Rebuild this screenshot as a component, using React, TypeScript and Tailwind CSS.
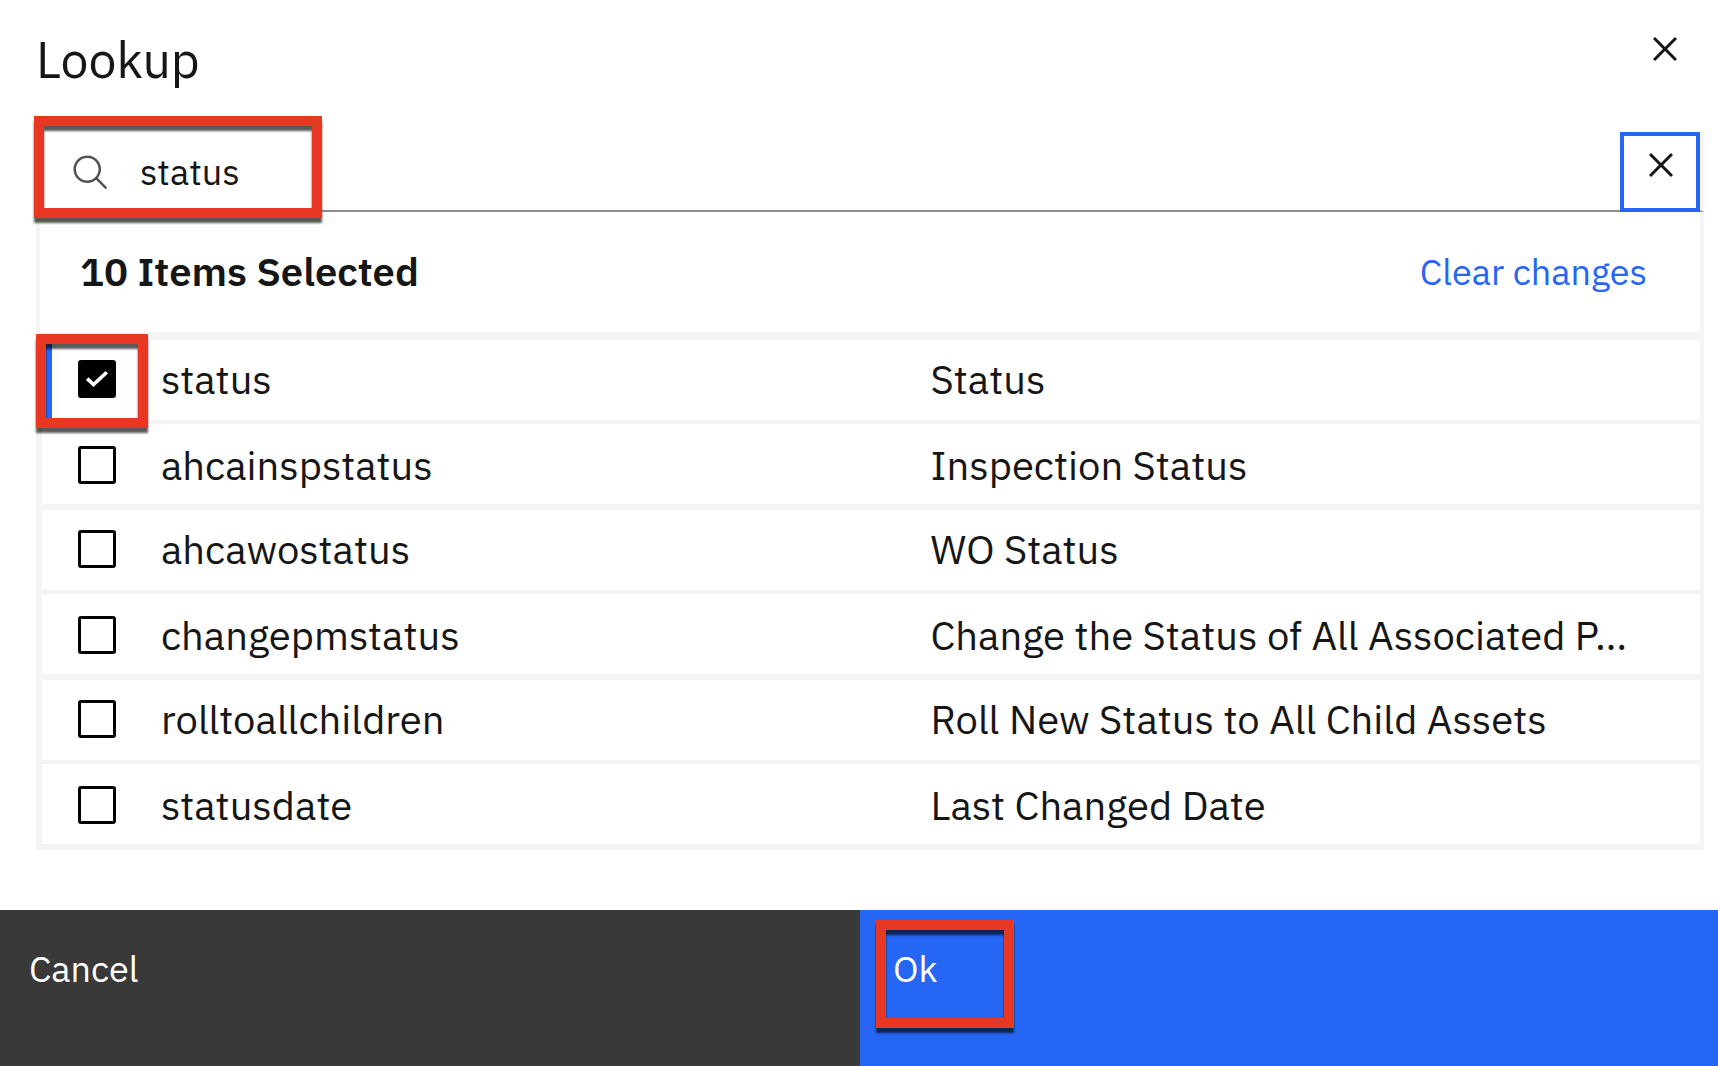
import { useState } from "react";

type Item = { id: string; label: string };

const items: Item[] = [
  { id: "status", label: "Status" },
  { id: "ahcainspstatus", label: "Inspection Status" },
  { id: "ahcawostatus", label: "WO Status" },
  { id: "changepmstatus", label: "Change the Status of All Associated P…" },
  { id: "rolltoallchildren", label: "Roll New Status to All Child Assets" },
  { id: "statusdate", label: "Last Changed Date" },
];

function CloseIcon() {
  return (
    <svg viewBox="0 0 32 32" className="size-12" fill="currentColor" aria-hidden="true">
      <path d="M24 9.4L22.6 8 16 14.6 9.4 8 8 9.4 14.6 16 8 22.6 9.4 24 16 17.4 22.6 24 24 22.6 17.4 16 24 9.4z" />
    </svg>
  );
}

function SearchIcon() {
  return (
    <svg viewBox="0 0 32 32" className="size-10 shrink-0 text-[#525252]" fill="currentColor" aria-hidden="true">
      <path d="M29,27.5859l-7.5521-7.5521a11.0177,11.0177,0,1,0-1.4141,1.4141L27.5859,29ZM4,13a9,9,0,1,1,9,9A9.01,9.01,0,0,1,4,13Z" />
    </svg>
  );
}

/* Red call-out frame laid over the control it points at. */
function Callout({ className }: { className: string }) {
  return (
    <span
      aria-hidden="true"
      className={
        "pointer-events-none absolute z-10 border-10 border-[#e83723] drop-shadow-[0_5px_1px_rgba(0,0,0,0.65)] " +
        className
      }
    />
  );
}

const cell = "border-b-4 border-[#f4f4f4] p-0 pb-0.5 group-even:border-b-6 group-even:pb-0 group-even:pt-0.5 ";

function Row({ item, checked, onToggle, first }: { item: Item; checked: boolean; onToggle: () => void; first: boolean }) {
  return (
    <tr className="group">
      <td
        className={
          cell +
          "relative h-[84px] group-even:h-[86px] " +
          (checked ? "shadow-[inset_10px_0_0_#2566f5]" : "")
        }
      >
        <span className="relative ml-9 block size-[38px]">
          <input
            id={item.id}
            type="checkbox"
            checked={checked}
            onChange={onToggle}
            className="block size-[38px] appearance-none rounded-[3px] border-3 border-black bg-white checked:bg-black"
          />
          {checked && (
            <svg viewBox="0 0 38 38" className="pointer-events-none absolute inset-0" fill="none" stroke="white" strokeWidth="3.6" aria-hidden="true">
              <path d="M9.2 18.6l6.3 6L28.8 12.3" />
            </svg>
          )}
        </span>
        {first && <Callout className="-left-1.5 -top-1.5 h-[94px] w-28" />}
      </td>
      <td className={cell}>
        <label htmlFor={item.id} className="block">
          {item.id}
        </label>
      </td>
      <td className={cell + "whitespace-nowrap"}>{item.label}</td>
    </tr>
  );
}

export default function App() {
  const [query, setQuery] = useState("status");
  const [selected, setSelected] = useState<string[]>(["status"]);

  const toggle = (id: string) =>
    setSelected((ids) => (ids.includes(id) ? ids.filter((x) => x !== id) : [...ids, id]));

  return (
    <div
      role="dialog"
      aria-labelledby="title"
      className="flex min-h-screen flex-col bg-white font-['IBM_Plex_Sans','Noto_Sans',sans-serif] text-[#161616]"
    >
      <header className="flex items-start justify-between pl-9 pr-[29px]">
        <h1 id="title" className="pt-7 text-[50px] leading-16">
          Lookup
        </h1>
        <button type="button" aria-label="Close" className="mt-[25px]">
          <CloseIcon />
        </button>
      </header>

      <main className="ml-9 mr-3.5 mt-10 flex-1">
        <div className="relative flex h-20 items-stretch border-b-2 border-r-4 border-b-[#8d8d8d] border-r-[#f4f4f4]">
          <label htmlFor="search" className="flex items-center pl-[35px] pt-1">
            <SearchIcon />
          </label>
          <input
            id="search"
            type="text"
            aria-label="Search"
            value={query}
            onChange={(e) => setQuery(e.target.value)}
            className="min-w-0 flex-1 pl-[29px] pt-0.5 text-[36px] leading-12 outline-none"
          />
          <button
            type="button"
            aria-label="Clear search"
            className="-mb-0.5 flex w-20 items-center justify-center border-4 border-[#2566f5] pb-3.5 pl-0.5"
          >
            <CloseIcon />
          </button>
          <Callout className="-left-0.5 -top-4 h-[102px] w-72" />
        </div>

        <section className="border-x-4 border-[#f4f4f4]">
          <div className="flex h-32 items-center justify-between border-b-8 border-[#f4f4f4] pl-10 pr-[53px]">
            <h2 className="pb-0.5 text-[40px] leading-12 font-semibold">10 Items Selected</h2>
            <button type="button" onClick={() => setSelected([])} className="text-[36px] leading-12 text-[#2566f5]">
              Clear changes
            </button>
          </div>
          <div className="border-l-2 border-[#f4f4f4]">
            <table className="w-full table-fixed border-separate border-spacing-0 text-[40px] leading-12">
              <colgroup>
                <col className="w-[119px]" />
                <col />
                <col />
              </colgroup>
              <tbody>
                {items.map((item, i) => (
                  <Row
                    key={item.id}
                    item={item}
                    first={i === 0}
                    checked={selected.includes(item.id)}
                    onToggle={() => toggle(item.id)}
                  />
                ))}
              </tbody>
            </table>
          </div>
        </section>
      </main>

      <footer className="mt-[60px] flex h-[156px] text-[36px] leading-12 text-white">
        <button type="button" className="flex w-[calc(50%+1px)] items-start bg-[#393939] pl-[29px] pt-[35px]">
          Cancel
        </button>
        <button type="button" className="relative flex flex-1 items-start bg-[#2566f5] pl-[33px] pt-[35px]">
          Ok
          <Callout className="left-4 top-2.5 h-[108px] w-[138px]" />
        </button>
      </footer>
    </div>
  );
}
